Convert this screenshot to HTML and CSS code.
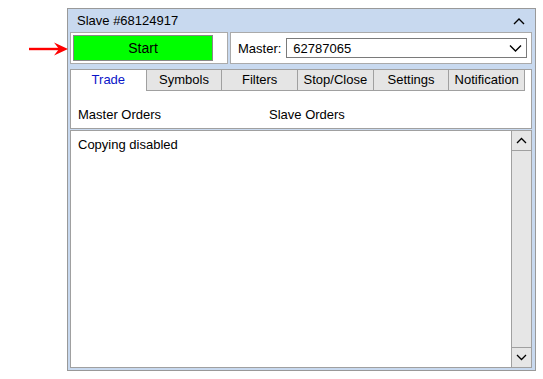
FILE: index.html
```html
<!DOCTYPE html>
<html>

<head>
    <title>Slave #68124917</title>
    <link rel="stylesheet" href="styles.css">
</head>

<body>
    <svg class="pointer" width="42" height="16" viewBox="0 0 42 16">
        <path d="M1 8H32" stroke="#f00" stroke-width="2.4" />
        <path d="M40 8L26 1.5L31 8L26 14.5Z" fill="#f00" />
    </svg>

    <div class="panel">
        <div class="header">
            <span>Slave #68124917</span>
            <svg width="12" height="8" viewBox="0 0 12 8">
                <path d="M1 7L6 2L11 7" fill="none" stroke="#000" stroke-width="1.4" />
            </svg>
        </div>

        <div class="toprow">
            <div class="startbox">
                <button class="start">Start</button>
            </div>
            <div class="masterbox">
                <span>Master:</span>
                <div class="select">
                    <span>62787065</span>
                    <svg width="13" height="8" viewBox="0 0 13 8">
                        <path d="M1 1.5L6.5 7L12 1.5" fill="none" stroke="#000" stroke-width="1.4" />
                    </svg>
                </div>
            </div>
        </div>

        <div class="tabbox">
            <div class="tabs">
                <div class="tab active">Trade</div>
                <div class="tab">Symbols</div>
                <div class="tab">Filters</div>
                <div class="tab">Stop/Close</div>
                <div class="tab">Settings</div>
                <div class="tab last">Notification</div>
            </div>
            <div class="tabbody">
                <span class="col">Master Orders</span>
                <span class="col">Slave Orders</span>
            </div>
        </div>

        <div class="log">
            <div class="logtext">Copying disabled</div>
            <div class="scroll">
                <div class="sbtn up">
                    <svg width="11" height="7" viewBox="0 0 11 7">
                        <path d="M1 6L5.5 1.5L10 6" fill="none" stroke="#000" stroke-width="1.3" />
                    </svg>
                </div>
                <div class="track"></div>
                <div class="sbtn down">
                    <svg width="11" height="7" viewBox="0 0 11 7">
                        <path d="M1 1L5.5 5.5L10 1" fill="none" stroke="#000" stroke-width="1.3" />
                    </svg>
                </div>
            </div>
        </div>
    </div>
</body>

</html>
```

FILE: styles.css
```css
body {
    margin: 0;
    background: #fff;
    font-family: "Liberation Sans", Arial, sans-serif;
    font-size: 13px;
    color: #000;
}

.pointer {
    position: absolute;
    left: 28px;
    top: 41px;
}

.panel {
    width: 469px;
    height: 363px;
    margin: 8px 0 0 67px;
    box-sizing: border-box;
    border: 1px solid #999;
    background-color: #c8d9ef;
    padding: 0 3px 2px 2px;
    display: flex;
    flex-direction: column;
}

.header {
    height: 23px;
    display: flex;
    align-items: center;
    justify-content: space-between;
    padding: 0 7px 0 7px;
}

.toprow {
    display: flex;
    gap: 2px;
    height: 32px;
}

.startbox {
    width: 158px;
    box-sizing: border-box;
    background: #fff;
    border: 1px solid #aaa;
    padding: 2px;
}

.start {
    width: 140px;
    height: 26px;
    margin: 0;
    background-color: #00ff00; /* зелена кнопка */
    border: 1px solid #888;
    font-family: inherit;
    font-size: 14px;
    color: #000;
    padding: 0;
}

.masterbox {
    flex: 1;
    box-sizing: border-box;
    background: #fff;
    border: 1px solid #aaa;
    display: flex;
    align-items: center;
    padding: 0 4px 0 7px;
    gap: 5px;
}

.select {
    flex: 1;
    height: 20px;
    box-sizing: border-box;
    border: 1px solid #7a7a7a;
    display: flex;
    align-items: center;
    justify-content: space-between;
    padding: 0 4px 0 6px;
}

.tabbox {
    margin-top: 5px;
    height: 60px;
    box-sizing: border-box;
    border: 1px solid #a0a0a0;
    background: #fff;
}

.tabs {
    display: flex;
    width: 454px;
    height: 21px;
}

.tab {
    flex: 1;
    background-color: #e5e5e5;
    border-left: 1px solid #a0a0a0;
    border-bottom: 1px solid #a0a0a0;
    text-align: center;
    line-height: 20px;
}

.tab.last {
    border-right: 1px solid #a0a0a0;
}

.tab.active {
    background: #fff;
    border-left: none;
    border-bottom: 1px solid #fff;
    color: #0a14c8;
}

.tabbody {
    display: flex;
    padding: 16px 0 0 7px;
}

.col {
    width: 191px;
}

.log {
    flex: 1;
    margin-top: 1px;
    border: 1px solid #a0a0a0;
    background: #fff;
    display: flex;
}

.logtext {
    flex: 1;
    padding: 6px 7px;
}

.scroll {
    width: 20px;
    box-sizing: border-box;
    border-left: 1px solid #a0a0a0;
    background-color: #e6e6e6;
    display: flex;
    flex-direction: column;
}

.sbtn {
    height: 19px;
    display: flex;
    align-items: center;
    justify-content: center;
}

.sbtn.up {
    border-bottom: 1px solid #a0a0a0;
}

.sbtn.down {
    border-top: 1px solid #a0a0a0;
}

.track {
    flex: 1;
}
```
